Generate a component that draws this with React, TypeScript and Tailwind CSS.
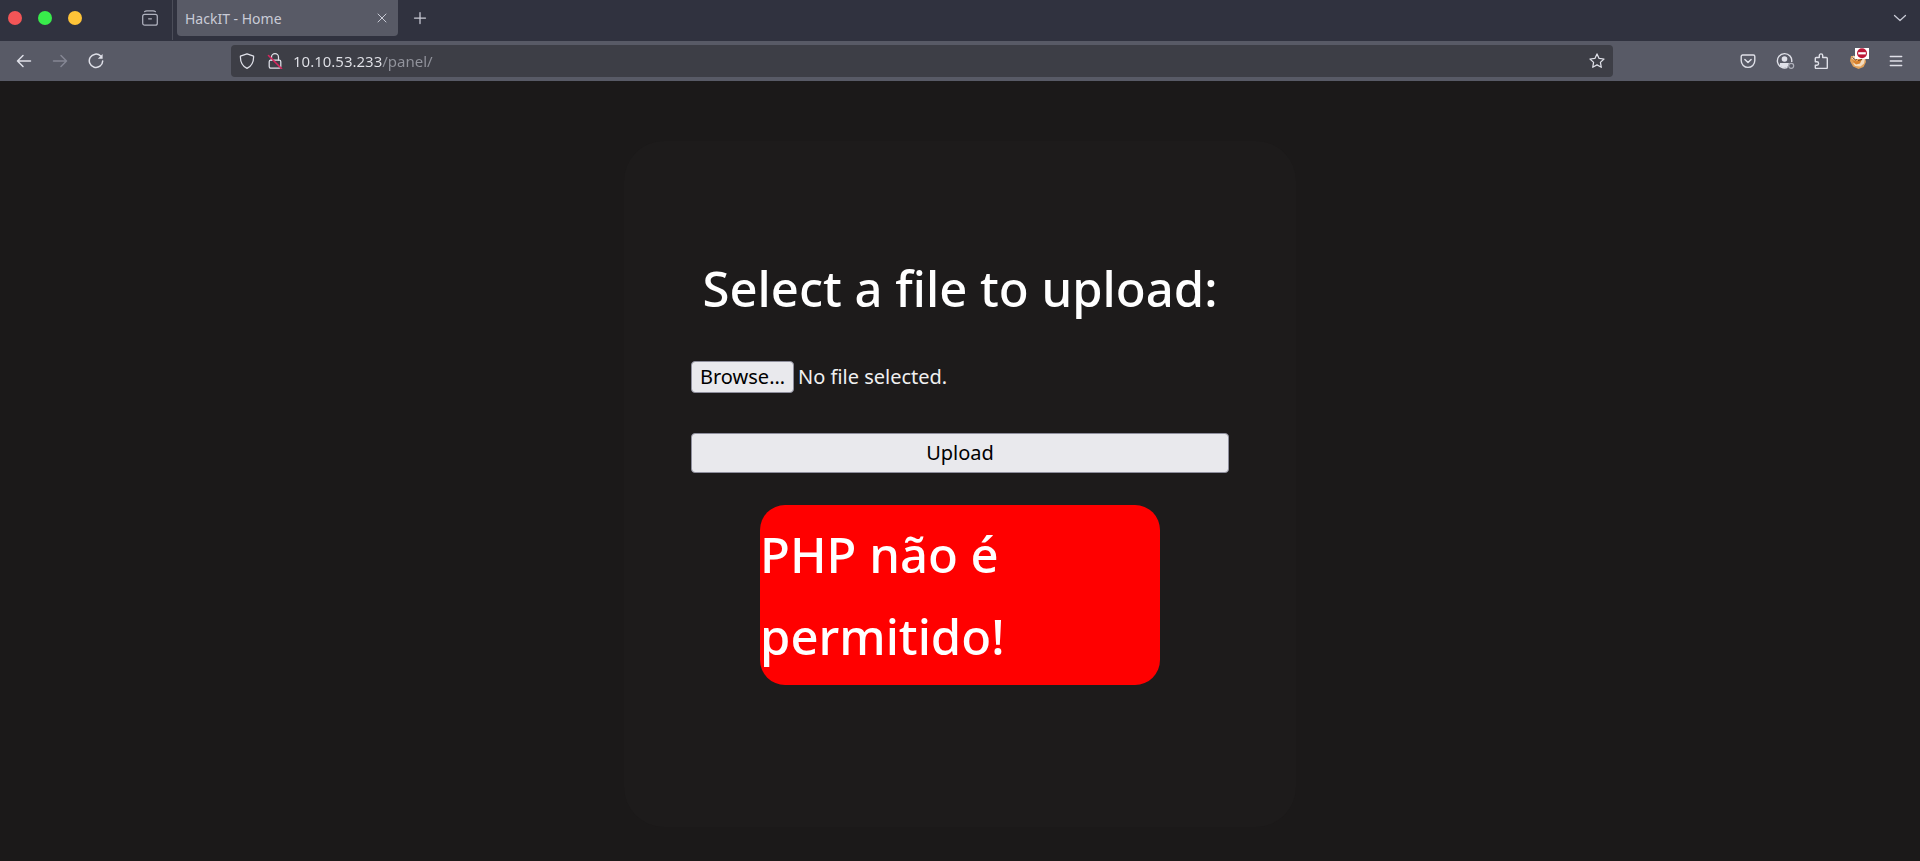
import { useState, type ReactNode } from "react";

function Icon({ children, className = "" }: { children: ReactNode; className?: string }) {
  return (
    <svg
      viewBox="0 0 16 16"
      className={`size-4 shrink-0 ${className}`}
      fill="none"
      stroke="currentColor"
      strokeWidth="1.25"
      strokeLinecap="round"
      strokeLinejoin="round"
      aria-hidden="true"
    >
      {children}
    </svg>
  );
}

function IconButton({ label, children, className = "" }: { label: string; children: ReactNode; className?: string }) {
  return (
    <button type="button" aria-label={label} className={`flex size-9 shrink-0 items-center justify-center ${className}`}>
      {children}
    </button>
  );
}

function TabBar() {
  return (
    <div className="flex h-[41px] items-start bg-[#30323f] text-[#c9cbd6]">
      <div className="flex h-9 w-[132px] shrink-0 items-center gap-4 pl-2">
        <button type="button" aria-label="Close window" className="size-[14px] rounded-full bg-[#f35557]" />
        <button type="button" aria-label="Minimize window" className="size-[14px] rounded-full bg-[#38ec4b]" />
        <button type="button" aria-label="Maximize window" className="size-[14px] rounded-full bg-[#fec438]" />
      </div>
      <IconButton label="Recent browsing">
        <Icon className="text-[#b0b2bf]">
          <rect x="0.7" y="4.4" width="14.6" height="10.8" rx="2" />
          <path d="M2.6 1.6C3.4.8 4 .8 5 .8h6c1 0 1.600 0 2.400.8M6.600 8.800h2.800" />
        </Icon>
      </IconButton>
      <div className="ml-1 h-10 w-px shrink-0 bg-[#4b4d59]" />
      <div className="ml-1 flex h-9 w-[221px] items-center justify-between rounded-b-sm bg-[#585a66] pl-2 pr-2">
        <span className="text-[14px]">HackIT - Home</span>
        <button type="button" aria-label="Close tab" className="flex size-4 items-center justify-center">
          <Icon>
            <path strokeWidth="1" d="m4 4 8 8M12 4l-8 8" />
          </Icon>
        </button>
      </div>
      <IconButton label="New tab" className="ml-1">
        <Icon>
          <path d="M8 2.500v11M2.500 8h11" />
        </Icon>
      </IconButton>
      <IconButton label="List all tabs" className="ml-auto mr-[2px]">
        <Icon>
          <path d="m2.500 5.500 5.500 5 5.500-5" />
        </Icon>
      </IconButton>
    </div>
  );
}

function Toolbar() {
  const [address, setAddress] = useState("10.10.53.233/panel/");
  return (
    <div className="flex h-10 items-center bg-[#585a66] text-[#dfe0e8]">
      <div className="flex w-[231px] shrink-0 pl-[6px]">
        <IconButton label="Back">
          <Icon>
            <path strokeWidth="1.500" d="M14.500 8H1.500M7 2.500 1.500 8 7 13.500" />
          </Icon>
        </IconButton>
        <IconButton label="Forward">
          <Icon className="text-[#858794]">
            <path strokeWidth="1.500" d="M1.500 8h13M9 2.500 14.500 8 9 13.500" />
          </Icon>
        </IconButton>
        <IconButton label="Reload">
          <Icon>
            <path strokeWidth="1.500" d="M12.700 3A6.700 6.700 0 1 0 14.700 8" />
            <path d="M14.600 1v4.800H9.800z" fill="currentColor" stroke="none" />
          </Icon>
        </IconButton>
      </div>
      <div className="flex h-8 min-w-0 flex-1 items-center rounded-sm bg-[#3d3e46] pl-2">
        <button type="button" aria-label="Tracking protection" className="flex w-7 shrink-0">
          <Icon>
            <path d="M8 .8 14.600 3.200C14.800 9 12.500 13 8 15.400 3.500 13 1.200 9 1.400 3.200z" />
          </Icon>
        </button>
        <button type="button" aria-label="Connection not secure" className="flex w-[26px] shrink-0">
          <Icon>
            <rect x="2.200" y="7.200" width="11.600" height="8" rx="1.600" />
            <path d="M4.500 7V4.200a3.500 3.500 0 0 1 7 0V7" />
            <path stroke="#d7265e" strokeWidth="1.600" d="m1.500 2.500 13 13" />
          </Icon>
        </button>
        <input
          type="text"
          aria-label="Address"
          value={address}
          onChange={(event) => setAddress(event.target.value)}
          className="min-w-0 flex-1 bg-[linear-gradient(90deg,#e3e4ea_89px,#92949d_89px)] bg-clip-text text-[15px] text-transparent caret-white outline-none"
        />
        <button type="button" aria-label="Bookmark this page" className="flex w-8 shrink-0 items-center justify-center">
          <Icon>
            <path d="m8 .900 2.100 4.500 4.900.6-3.600 3.400.9 4.900L8 11.900l-4.300 2.400.9-4.900L1 6l4.900-.6z" />
          </Icon>
        </button>
      </div>
      <div className="flex w-[307px] shrink-0 justify-end gap-[1px] pr-[6px]">
        <IconButton label="Save to Pocket">
          <Icon>
            <path strokeWidth="1.400" d="M2.600 2h10.800a1.400 1.400 0 0 1 1.400 1.400v4.200a6.800 6.800 0 0 1-13.600 0V3.400A1.400 1.400 0 0 1 2.600 2z" />
            <path strokeWidth="1.500" d="M4.900 6.500 8 9.500l3.100-3" />
          </Icon>
        </IconButton>
        <IconButton label="Account">
          <svg viewBox="0 0 19 18" className="h-[18px] w-[19px]" fill="none" stroke="currentColor" strokeWidth="1.400" aria-hidden="true">
            <path d="M11.500 15.400A7.200 7.200 0 1 1 15.700 10" />
            <circle cx="8.500" cy="7" r="2.800" fill="currentColor" stroke="none" />
            <path d="M4 11h9l-1 3.600C9 16 6.500 15.800 3.700 13.800z" fill="currentColor" stroke="none" />
            <circle cx="15.200" cy="13.800" r="2.500" stroke="#aeb0ba" strokeWidth="1.200" />
          </svg>
        </IconButton>
        <IconButton label="Extensions">
          <Icon>
            <path strokeWidth="1.400" d="M5.300 4.500V2.600a1.700 1.700 0 0 1 3.400 0v1.900h3.600a1 1 0 0 1 1 1v9a1 1 0 0 1-1 1h-10a1 1 0 0 1-1-1v-2.300h1.600a1.700 1.700 0 0 0 0-3.400H1.300V5.500a1 1 0 0 1 1-1z" />
          </Icon>
        </IconButton>
        <IconButton label="Proxy extension" className="pb-[6px]">
          <svg viewBox="0 0 20 21" className="h-[21px] w-5" aria-hidden="true">
            <path d="M2 8 1 13l3 5.500L9.500 21l5-2 2.500-5-1-6z" fill="#e2a15a" />
            <path d="m2.500 10.500 2-3 3.500 2-2 2.500zM12 12l4-2-1 5.500-3.500 3L6 18l-2-3 4 1z" fill="#f3ddc1" />
            <path d="m3 12 4 1.500 6-2.500-2 4.500-4 1z" fill="#d9812c" />
            <path d="m3.500 9.500 3 2.500 2-1.500M9 12.500l4-1" stroke="#704326" fill="none" />
            <path d="M6 0h14v11H6z" fill="#fff" />
            <circle cx="13" cy="5.300" r="5" fill="#bd1737" />
            <path d="M9.200 4.200h7.600v2.200H9.200z" fill="#fff" />
          </svg>
        </IconButton>
        <IconButton label="Open application menu">
          <Icon>
            <path strokeWidth="1.400" d="M2.300 3.500h11.400M2.300 8h11.400M2.300 12.500h11.400" />
          </Icon>
        </IconButton>
      </div>
    </div>
  );
}

function UploadPanel() {
  const [fileName, setFileName] = useState("");
  return (
    <section className="flex w-[35%] min-w-[600px] flex-col items-center rounded-[40px] bg-[#1d1b1b] px-[67px] pb-[142px] pt-[106px]">
      <form className="relative flex w-full flex-col" onSubmit={(event) => event.preventDefault()}>
        <h1 className="text-center text-[49px] font-medium leading-[82px] text-white">Select a file to upload:</h1>
        <div className="mt-8 flex items-center gap-1 text-[20px] leading-[30px]">
          <input
            id="upload-file"
            type="file"
            className="peer sr-only"
            onChange={(event) => setFileName(event.target.files?.[0]?.name ?? "")}
          />
          <label
            htmlFor="upload-file"
            className="rounded-[4px] border border-[#8f8f9d] bg-[#e9e9ed] px-2 text-black peer-focus-visible:outline-2"
          >
            Browse…
          </label>
          <span className="text-[#f0f0f0]">{fileName || "No file selected."}</span>
        </div>
        <button type="submit" className="mt-10 h-10 rounded-[4px] border border-[#8f8f9d] bg-[#e9e9ed] text-[20px] text-black">
          Upload
        </button>
      </form>
      <p role="alert" className="mt-8 w-[400px] rounded-[25px] bg-[#ff0000] py-2 text-[49px] font-medium leading-[82px] text-white">
        PHP não é permitido!
      </p>
    </section>
  );
}

export default function App() {
  return (
    <div className="flex min-h-screen flex-col bg-[#1b1919] font-['Noto_Sans',sans-serif]">
      <header>
        <TabBar />
        <Toolbar />
      </header>
      <main className="flex flex-1 items-start justify-center pt-[60px]">
        <UploadPanel />
      </main>
    </div>
  );
}
